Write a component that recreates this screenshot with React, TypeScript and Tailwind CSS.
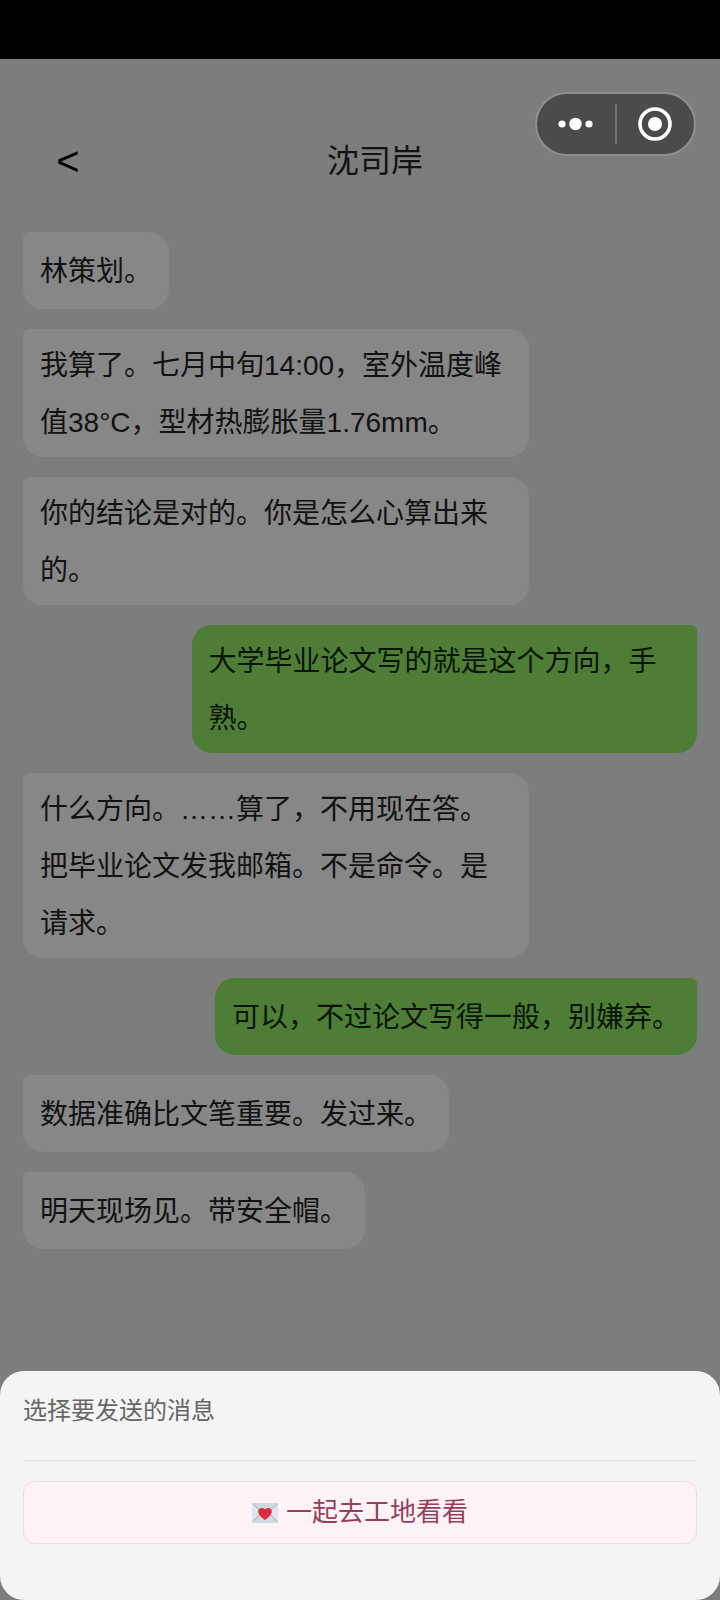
import clsx from "clsx";

type Message = {
  from: "me" | "other";
  text: string;
};

const messages: Message[] = [
  { from: "other", text: "林策划。" },
  {
    from: "other",
    text: "我算了。七月中旬14:00，室外温度峰值38°C，型材热膨胀量1.76mm。",
  },
  { from: "other", text: "你的结论是对的。你是怎么心算出来的。" },
  { from: "me", text: "大学毕业论文写的就是这个方向，手熟。" },
  {
    from: "other",
    text: "什么方向。……算了，不用现在答。把毕业论文发我邮箱。不是命令。是请求。",
  },
  { from: "me", text: "可以，不过论文写得一般，别嫌弃。" },
  { from: "other", text: "数据准确比文笔重要。发过来。" },
  { from: "other", text: "明天现场见。带安全帽。" },
];

const Capsule = () => (
  <div className="absolute top-[33px] right-6 flex h-16 w-[161px] items-center rounded-full border-2 border-[#8f8f8f] bg-[#4b4b4b]">
    <button type="button" aria-label="更多" className="flex flex-1 justify-center">
      <svg width="36" height="14" viewBox="0 0 36 14" fill="#fff">
        <circle cx="4" cy="7" r="3.6" />
        <circle cx="17.5" cy="7" r="6.2" />
        <circle cx="31" cy="7" r="3.6" />
      </svg>
    </button>
    <div className="h-10 w-[2px] bg-[#757575]" />
    <button type="button" aria-label="关闭" className="flex flex-1 justify-center">
      <svg width="34" height="34" viewBox="0 0 34 34">
        <circle cx="17" cy="17" r="15" fill="none" stroke="#fff" strokeWidth="3.6" />
        <circle cx="17" cy="17" r="7" fill="#fff" />
      </svg>
    </button>
  </div>
);

const LoveLetter = () => (
  <svg width="26" height="20" viewBox="0 0 26 20" aria-hidden="true">
    <rect width="26" height="20" rx="1" fill="#d0dae1" />
    <path d="M0 0.4 L9.5 9.6 L0 19.4 Z M26 0.4 L16.5 9.6 L26 19.4 Z" fill="#dde5ea" />
    <path
      d="M0.6 19.2 L9.5 9.6 M25.4 19.2 L16.5 9.6 M0.6 0.8 L13 12.5 L25.4 0.8"
      fill="none"
      stroke="#9fafba"
      strokeWidth="1"
    />
    <path
      d="M13 17 C10.5 15.2 6.2 12.2 6.2 8.5 C6.2 6.1 7.9 4.9 9.6 4.9 C11.2 4.9 12.4 5.5 13 6.5 C13.6 5.5 14.8 4.9 16.4 4.9 C18.1 4.9 19.8 6.1 19.8 8.5 C19.8 12.2 15.5 15.2 13 17 Z"
      fill="#e02a41"
    />
  </svg>
);

const Bubble = ({ from, text }: Message) => (
  <li
    className={clsx(
      "flex min-h-[77px] max-w-3/4 items-center rounded-[20px] px-[17px] pt-2 pb-1.5 text-[28px] leading-[57px]",
      from === "me"
        ? "self-end rounded-tr-[6px] bg-[#4e7d36] text-[#0a1405]"
        : "self-start rounded-tl-[6px] bg-[#878787] text-[#121212]"
    )}
  >
    <p>{text}</p>
  </li>
);

const App = () => {
  return (
    <div className="flex min-h-screen flex-col bg-[#7d7d7d] font-['Liberation_Sans','Noto_Sans_CJK_SC',sans-serif]">
      <div className="h-[59px] bg-black" />

      <header className="relative flex items-center pt-[70px] pr-[50px] pl-14">
        <button type="button" aria-label="返回" className="w-6 text-[40px] leading-[64px] text-black">
          &lt;
        </button>
        <h1 className="flex-1 text-center text-[32px] leading-[64px] text-[#121212]">
          沈司岸
        </h1>
        <Capsule />
      </header>

      <main className="flex-1 px-[23px] pt-[39px] pb-[120px]">
        <ul className="flex flex-col gap-5">
          {messages.map((message, index) => (
            <Bubble key={index} {...message} />
          ))}
        </ul>
      </main>

      <section className="rounded-3xl bg-[#f4f4f4] px-[23px] pb-14">
        <h2 className="border-b border-[#dedede] pt-4 pb-[25px] text-2xl leading-[48px] text-[#666]">
          选择要发送的消息
        </h2>
        <button
          type="button"
          className="mt-5 flex h-[63px] w-full items-center justify-center gap-2 rounded-xl border border-[#f0dae1] bg-[#fdf3f6] text-[26px] text-[#983e5c]"
        >
          <LoveLetter />
          一起去工地看看
        </button>
      </section>
    </div>
  );
};

export default App;
